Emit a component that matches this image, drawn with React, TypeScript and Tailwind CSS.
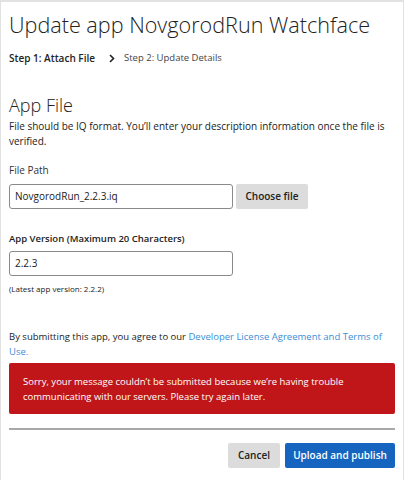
export default function App() {
  return (
    <div
      className="h-[480px] w-[404px] overflow-hidden border-x border-t-2 border-[#e2e2e2] bg-white text-[#222]"
      style={{ fontFamily: '"Open Sans", "Liberation Sans", sans-serif' }}
    >
      <div className="px-[8px]">
        <h1 className="mt-[9px] text-[21.6px] font-light leading-[28px] text-[#222]">
          Update app NovgorodRun Watchface
        </h1>
        <div className="mt-[12px] flex items-center text-[10px] leading-[14px]">
          <span className="font-semibold">Step 1: Attach File</span>
          <svg className="ml-[14px] mr-[9px]" width="6" height="9" viewBox="0 0 6 9">
            <path d="M1 1 L4.5 4.5 L1 8" fill="none" stroke="#222" strokeWidth="1.6" />
          </svg>
          <span className="text-[9.5px] text-[#444]">Step 2: Update Details</span>
        </div>

        <h2 className="mt-[29px] text-[18px] font-light leading-[22px]">App File</h2>
        <p className="mt-[3px] text-[10px] leading-[15px]">
          File should be IQ format. You’ll enter your description information once the file is verified.
        </p>

        <div className="mt-[14px] text-[10px] leading-[14px] text-[#333]">File Path</div>
        <div className="mt-[7px] flex items-center gap-[3px]">
          <div className="flex h-[25px] w-[224px] items-center rounded-[3px] border border-[#8a8a8a] px-[5px] text-[10px]">
            NovgorodRun_2.2.3.iq
          </div>
          <button className="h-[25px] w-[72px] rounded-[2px] bg-[#dcdcdc] text-[10px] font-semibold text-[#222]">
            Choose file
          </button>
        </div>

        <div className="mt-[23px] text-[9.5px] font-semibold leading-[14px]">App Version (Maximum 20 Characters)</div>
        <div className="mt-[5px] flex h-[25px] w-[224px] items-center rounded-[3px] border border-[#8a8a8a] px-[5px] text-[10px]">
          2.2.3
        </div>
        <div className="mt-[7px] text-[8px] leading-[12px]">(Latest app version: 2.2.2)</div>

        <p className="mt-[34px] text-[9.5px] leading-[15px]">
          By submitting this app, you agree to our{" "}
          <span className="text-[#3b8ed8]">Developer License Agreement and Terms of Use.</span>
        </p>

        <div className="mt-[4px] rounded-[2px] bg-[#c01619] px-[14px] pb-[10px] pt-[11px] text-[9.5px] leading-[15px] text-white">
          Sorry, your message couldn’t be submitted because we’re having trouble communicating with our servers. Please try again later.
        </div>

        <div className="mt-[14px] h-[2px] bg-[#a8a8a8]" />

        <div className="mt-[13px] flex justify-end gap-[5px]">
          <button className="h-[25px] w-[52px] rounded-[2px] bg-[#dcdcdc] text-[10px] font-semibold text-[#222]">
            Cancel
          </button>
          <button className="h-[25px] w-[110px] rounded-[2px] bg-[#1565c0] text-[10px] font-semibold text-white">
            Upload and publish
          </button>
        </div>
      </div>
    </div>
  );
}
